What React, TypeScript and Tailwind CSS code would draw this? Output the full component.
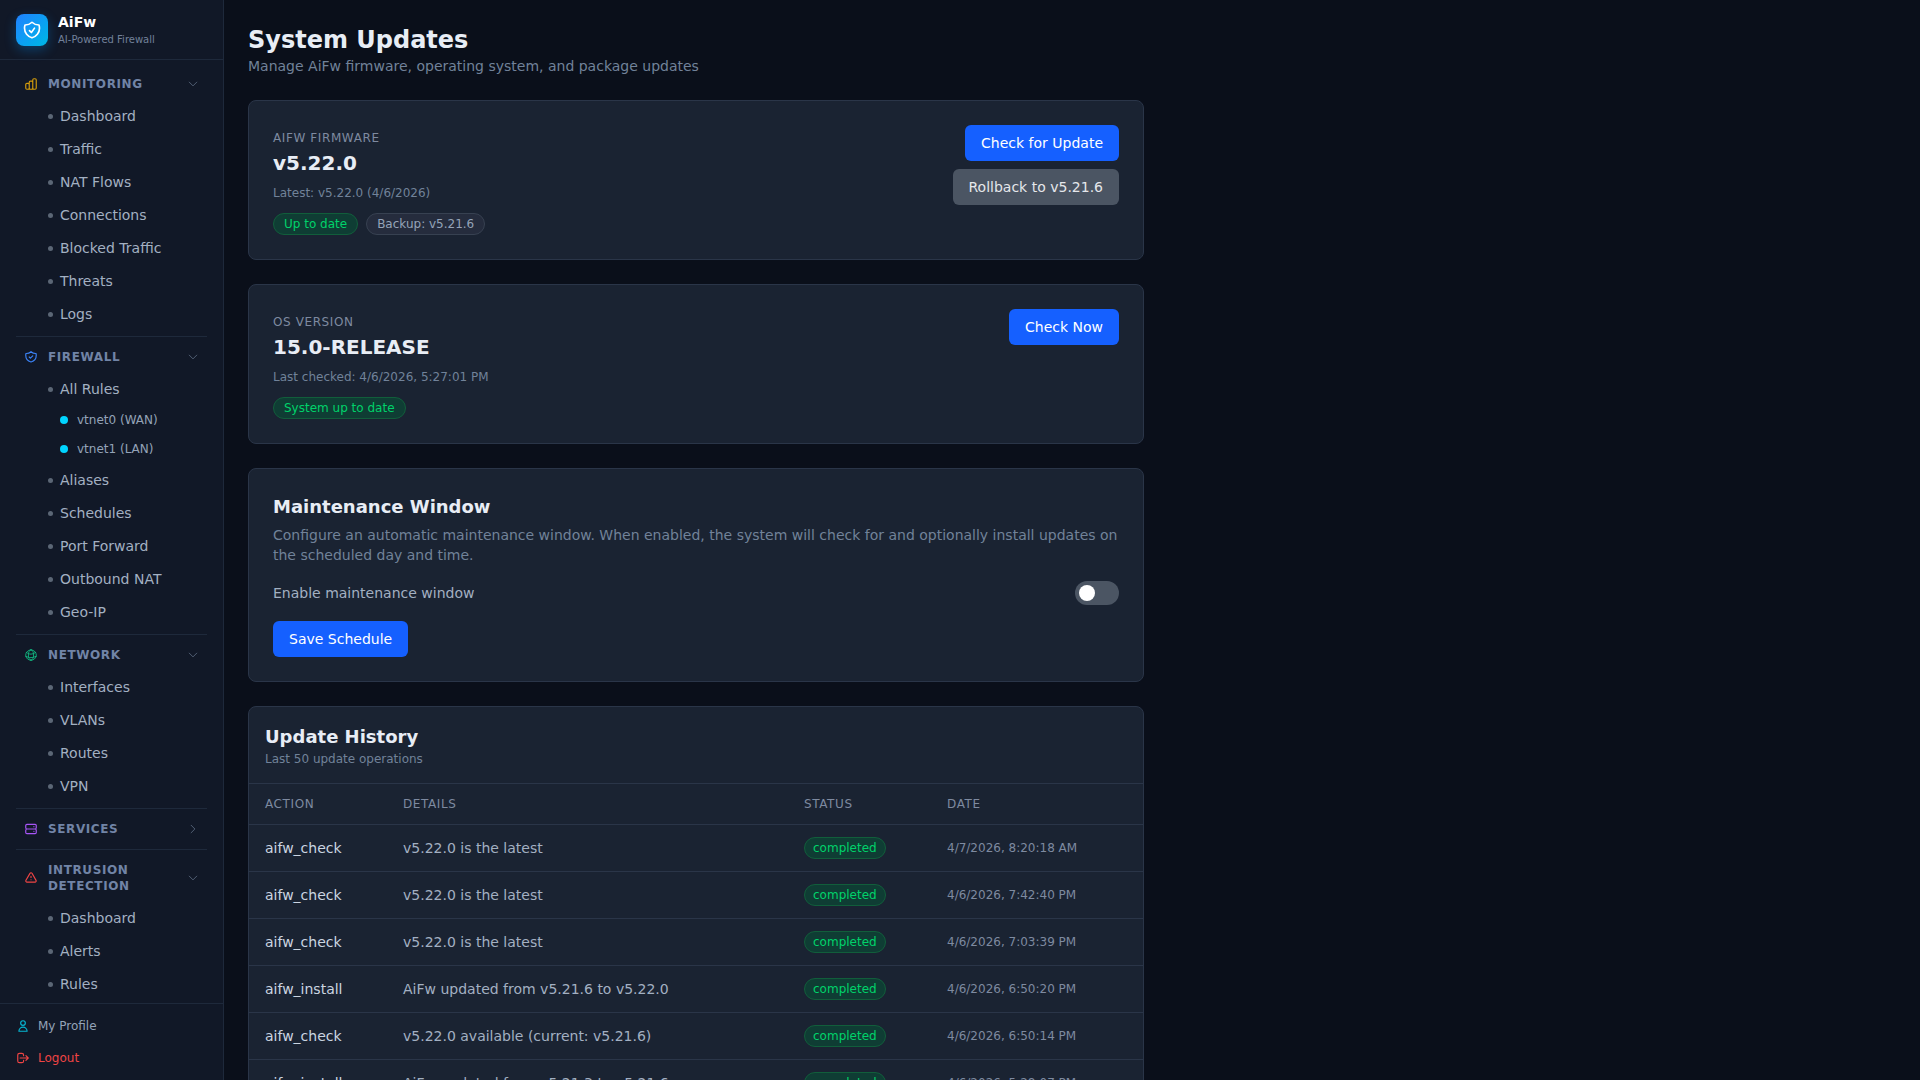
import { HiOutlineChartBar, HiOutlineShieldCheck, HiOutlineServer, HiOutlineExclamation, HiOutlineUser, HiOutlineLogout } from "react-icons/hi"
import { HiOutlineChevronDown, HiOutlineChevronRight, HiOutlineGlobeAlt } from "react-icons/hi2"
import type { ReactNode } from "react"

function NavItem({ label }: { label: string }) {
  return (
    <div className="flex h-[33px] items-center pl-[48px]">
      <span className="mr-[7px] h-[5px] w-[5px] rounded-full bg-[#5b6675]" />
      <span className="text-[14px] text-[#a3b0c2]">{label}</span>
    </div>
  )
}

function SubItem({ label }: { label: string }) {
  return (
    <div className="flex h-[29px] items-center pl-[60px]">
      <span className="mr-[9px] h-[8px] w-[8px] rounded-full bg-[#00d4ff]" />
      <span className="text-[12px] text-[#94a3b8]">{label}</span>
    </div>
  )
}

function Group({ icon, title, open = true, children, last, className = "pb-[5px]" }: { icon: ReactNode; title: ReactNode; open?: boolean; children?: ReactNode; last?: boolean; className?: string }) {
  return (
    <div className={`mx-[16px] ${className} ${last ? "" : "mb-[4px] border-b border-[#1e293b]"}`}>
      <div className="flex items-center gap-[10px] px-[8px] py-[8px]">
        {icon}
        <span className="flex-1 text-[12px] leading-[16px] font-bold tracking-[0.6px] text-[#7184a6] uppercase">{title}</span>
        {open ? <HiOutlineChevronDown className="h-[12px] w-[12px] text-[#64748b]" /> : <HiOutlineChevronRight className="h-[12px] w-[12px] text-[#64748b]" />}
      </div>
      {children && <div className="-mx-[16px]">{children}</div>}
    </div>
  )
}

function Sidebar() {
  return (
    <aside className="flex h-screen w-[224px] shrink-0 flex-col border-r border-[#1e293b] bg-[#111827]">
      <div className="flex h-[60px] items-center gap-[10px] border-b border-[#1e293b] px-[16px]">
        <div className="flex h-[32px] w-[32px] items-center justify-center rounded-[8px] bg-gradient-to-br from-[#2080ff] to-[#00b8e6] shadow-[0_4px_12px_rgba(0,150,255,0.3)]">
          <svg viewBox="0 0 24 24" fill="none" stroke="white" strokeWidth={2} strokeLinecap="round" strokeLinejoin="round" className="h-[20px] w-[20px]">
            <path d="M9 12.75 11.25 15 15 9.75m-3-7.036A11.959 11.959 0 0 1 3.598 6 11.99 11.99 0 0 0 3 9.749c0 5.592 3.824 10.29 9 11.623 5.176-1.332 9-6.03 9-11.622 0-1.31-.21-2.571-.598-3.751h-.152c-3.196 0-6.1-1.248-8.25-3.285Z" />
          </svg>
        </div>
        <div className="pt-[2px]">
          <div className="text-[14px] leading-[17px] font-bold text-white">AiFw</div>
          <div className="mt-[2px] text-[10px] leading-[14px] text-[#71819a]">AI-Powered Firewall</div>
        </div>
      </div>
      <nav className="min-h-0 flex-1 overflow-hidden pt-[8px]">
        <Group icon={<HiOutlineChartBar className="h-[14px] w-[14px] text-[#d29a0c]" />} title="Monitoring">
          {["Dashboard", "Traffic", "NAT Flows", "Connections", "Blocked Traffic", "Threats", "Logs"].map((l) => (
            <NavItem key={l} label={l} />
          ))}
        </Group>
        <Group icon={<HiOutlineShieldCheck className="h-[14px] w-[14px] text-[#3b82f6]" />} title="Firewall">
          <NavItem label="All Rules" />
          <div className="-mt-[1px] mb-[1px]">
            <SubItem label="vtnet0 (WAN)" />
            <SubItem label="vtnet1 (LAN)" />
          </div>
          {["Aliases", "Schedules", "Port Forward", "Outbound NAT", "Geo-IP"].map((l) => (
            <NavItem key={l} label={l} />
          ))}
        </Group>
        <Group icon={<HiOutlineGlobeAlt className="h-[14px] w-[14px] text-[#10b981]" />} title="Network">
          {["Interfaces", "VLANs", "Routes", "VPN"].map((l) => (
            <NavItem key={l} label={l} />
          ))}
        </Group>
        <Group className="pb-[4px]" icon={<HiOutlineServer className="h-[14px] w-[14px] text-[#a855f7]" />} title="Services" open={false} />
        <Group last icon={<HiOutlineExclamation className="h-[14px] w-[14px] text-[#ef4444]" />} title={<>Intrusion<br />Detection</>}>
          {["Dashboard", "Alerts", "Rules"].map((l) => (
            <NavItem key={l} label={l} />
          ))}
        </Group>
      </nav>
      <div className="h-[77px] shrink-0 border-t border-[#1e293b] px-[16px] pt-[6px]">
        <div className="flex h-[32px] items-center gap-[8px]">
          <HiOutlineUser className="h-[14px] w-[14px] text-[#06b6d4]" />
          <span className="text-[12px] text-[#94a3b8]">My Profile</span>
        </div>
        <div className="flex h-[32px] items-center gap-[8px]">
          <HiOutlineLogout className="h-[14px] w-[14px] text-[#ef4444]" />
          <span className="text-[12px] text-[#ef4444]">Logout</span>
        </div>
      </div>
    </aside>
  )
}

function Card({ children, className = "" }: { children: ReactNode; className?: string }) {
  return <div className={`rounded-[8px] border border-[#2a3548] bg-[#1a2332] ${className}`}>{children}</div>
}

function Badge({ children, gray, className = "px-[10px]" }: { children: ReactNode; gray?: boolean; className?: string }) {
  return (
    <span className={`inline-flex h-[22px] items-center rounded-full border text-[12px] ${className} ${gray ? "border-[#374151] bg-[#252c3d] text-[#94a3b8]" : "border-[#115e3b] bg-[#0f3d34] text-[#00d26a]"}`}>
      {children}
    </span>
  )
}

function Btn({ children, gray }: { children: ReactNode; gray?: boolean }) {
  return (
    <button className={`h-[36px] rounded-[6px] px-[16px] text-[14px] ${gray ? "bg-[#4b5563] text-[#e5e7eb]" : "bg-[#1560ff] text-white"}`}>
      {children}
    </button>
  )
}

function VersionInfo({ label, version, detail, children }: { label: string; version: string; detail: string; children: ReactNode }) {
  return (
    <div>
      <div className="pt-[2px] text-[12px] leading-[22px] tracking-[0.6px] text-[#7e8aa0] uppercase">{label}</div>
      <div className="text-[20px] leading-[28px] font-bold text-[#e8edf5]">{version}</div>
      <div className="mt-[8px] text-[12px] leading-[16px] text-[#718299]">{detail}</div>
      <div className="mt-[12px] flex gap-[8px]">{children}</div>
    </div>
  )
}

const rows = [
  ["aifw_check", "v5.22.0 is the latest", "4/7/2026, 8:20:18 AM"],
  ["aifw_check", "v5.22.0 is the latest", "4/6/2026, 7:42:40 PM"],
  ["aifw_check", "v5.22.0 is the latest", "4/6/2026, 7:03:39 PM"],
  ["aifw_install", "AiFw updated from v5.21.6 to v5.22.0", "4/6/2026, 6:50:20 PM"],
  ["aifw_check", "v5.22.0 available (current: v5.21.6)", "4/6/2026, 6:50:14 PM"],
  ["aifw_install", "AiFw updated from v5.21.3 to v5.21.6", "4/6/2026, 5:28:07 PM"],
]

export default function App() {
  return (
    <div className="flex h-screen overflow-hidden bg-[#0a0f1a] font-['DejaVu_Sans',sans-serif]">
      <Sidebar />
      <main className="min-w-0 flex-1 overflow-hidden p-[24px]">
        <div className="max-w-[896px] space-y-[24px]">
          <div className="h-[52px]">
            <h1 className="text-[24px] leading-[32px] font-bold text-[#e8edf5]">System Updates</h1>
            <p className="text-[14px] leading-[20px] text-[#718299]">Manage AiFw firmware, operating system, and package updates</p>
          </div>

          <Card className="flex h-[160px] items-start justify-between p-[24px]">
            <VersionInfo label="AiFw Firmware" version="v5.22.0" detail="Latest: v5.22.0 (4/6/2026)">
              <Badge>Up to date</Badge>
              <Badge gray>Backup: v5.21.6</Badge>
            </VersionInfo>
            <div className="flex flex-col items-end gap-[8px]">
              <Btn>Check for Update</Btn>
              <Btn gray>Rollback to v5.21.6</Btn>
            </div>
          </Card>

          <Card className="flex h-[160px] items-start justify-between p-[24px]">
            <VersionInfo label="OS Version" version="15.0-RELEASE" detail="Last checked: 4/6/2026, 5:27:01 PM">
              <Badge>System up to date</Badge>
            </VersionInfo>
            <Btn>Check Now</Btn>
          </Card>

          <Card className="h-[214px] p-[24px]">
            <h2 className="text-[18px] leading-[28px] font-bold text-[#e8edf5]">Maintenance Window</h2>
            <p className="mt-[4px] text-[14px] leading-[20px] text-[#718299]">
              Configure an automatic maintenance window. When enabled, the system will check for and optionally install updates on the scheduled day and time.
            </p>
            <div className="mt-[16px] flex h-[24px] items-center justify-between">
              <span className="text-[14px] text-[#a3b0c2]">Enable maintenance window</span>
              <div className="flex h-[24px] w-[44px] items-center rounded-full bg-[#4b5563] px-[2px]">
                <span className="h-[16px] w-[16px] translate-x-[2px] rounded-full bg-white" />
              </div>
            </div>
            <div className="mt-[16px]">
              <Btn>Save Schedule</Btn>
            </div>
          </Card>

          <Card>
            <div className="h-[77px] border-b border-[#2a3548] px-[16px] pt-[16px]">
              <h2 className="text-[18px] leading-[28px] font-bold text-[#e8edf5]">Update History</h2>
              <p className="text-[12px] leading-[16px] text-[#718299]">Last 50 update operations</p>
            </div>
            <table className="w-full table-fixed border-collapse text-left">
              <thead>
                <tr className="h-[40px] border-b border-[#2a3548] text-[12px] tracking-[0.6px] text-[#7e8aa0] uppercase">
                  <th className="w-[154px] pt-[1px] pl-[16px] font-normal">Action</th>
                  <th className="w-[401px] pt-[1px] font-normal">Details</th>
                  <th className="w-[143px] pt-[1px] font-normal">Status</th>
                  <th className="pt-[1px] font-normal">Date</th>
                </tr>
              </thead>
              <tbody>
                {rows.map((r, i) => (
                  <tr key={i} className="h-[47px] border-b border-[#2a3548]">
                    <td className="pt-[2px] pl-[16px] text-[14px] text-[#cbd5e1]">{r[0]}</td>
                    <td className="pt-[2px] text-[14px] text-[#a3b0c2]">{r[1]}</td>
                    <td>
                      <div className="flex">
                        <Badge className="px-[8px]">completed</Badge>
                      </div>
                    </td>
                    <td className="text-[12px] text-[#7e8aa0]">{r[2]}</td>
                  </tr>
                ))}
              </tbody>
            </table>
          </Card>
        </div>
      </main>
    </div>
  )
}
